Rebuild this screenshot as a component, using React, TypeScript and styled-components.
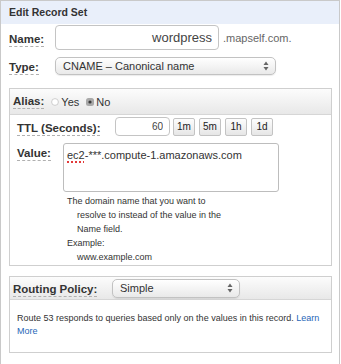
import React from 'react';
import styled, { createGlobalStyle } from 'styled-components';

const Global = createGlobalStyle`
  html, body { margin: 0; padding: 0; background: #fff; }
  body { font-family: "Liberation Sans", Arial, Helvetica, sans-serif; color: #333; }
  * { box-sizing: border-box; }
`;

const Frame = styled.div`
  width: 340px;
  height: 364px;
  border: 1px solid #c9c9c9;
  border-bottom: none;
  background: #fff;
`;

const Header = styled.div`
  height: 23px;
  background: #e9effa;
  padding-left: 8px;
  font-size: 10.5px;
  font-weight: bold;
  line-height: 23px;
  color: #333;
`;

const Body = styled.div`
  padding: 1px 7px 0 8px;
`;

const Row = styled.div<{ $mt?: number }>`
  display: flex;
  align-items: center;
  margin-top: ${p => p.$mt ?? 0}px;
`;

const LabelCell = styled.div<{ $w: number; $top?: boolean }>`
  width: ${p => p.$w}px;
  flex: none;
  align-self: ${p => (p.$top ? 'flex-start' : 'center')};
`;

const Label = styled.span`
  display: inline-block;
  font-size: 11.5px;
  font-weight: bold;
  color: #333;
  line-height: 13px;
  border-bottom: 1px dashed #b0b0b0;
`;

const TextInput = styled.input<{ $w: number; $h: number; $fs: number }>`
  width: ${p => p.$w}px;
  height: ${p => p.$h}px;
  border: 1px solid #c4c4c4;
  border-radius: 4px;
  font-family: inherit;
  font-size: ${p => p.$fs}px;
  color: #444;
  text-align: right;
  padding: 0 6px;
  background: #fff;
  outline: none;
`;

const Suffix = styled.span`
  font-size: 11px;
  color: #666;
  margin-left: 4px;
`;

const Select = styled.div<{ $w: number; $h: number }>`
  width: ${p => p.$w}px;
  height: ${p => p.$h}px;
  border: 1px solid #c2c2c2;
  border-radius: 5px;
  background: linear-gradient(#ffffff, #e9e9e9);
  box-shadow: 0 1px 1px rgba(0, 0, 0, 0.08);
  display: flex;
  align-items: center;
  justify-content: space-between;
  padding: 0 6px 0 7px;
  font-size: 11px;
  color: #333;
`;

const Arrows = () => (
  <svg width="6" height="10" viewBox="0 0 6 10">
    <path d="M3 0.5 L5.5 4 H0.5 Z" fill="#666" />
    <path d="M3 9.5 L5.5 6 H0.5 Z" fill="#666" />
  </svg>
);

const Panel = styled.div<{ $mt: number }>`
  width: 323px;
  border: 1px solid #cfcfcf;
  margin-top: ${p => p.$mt}px;
`;

const PanelHeader = styled.div<{ $h: number }>`
  height: ${p => p.$h}px;
  background: linear-gradient(#fcfcfc, #e8e8e8);
  border-bottom: 1px solid #d6d6d6;
  display: flex;
  align-items: center;
  padding-left: 3px;
`;

const RadioGroup = styled.label`
  display: inline-flex;
  align-items: center;
  font-size: 11px;
  color: #333;
  margin-left: 7px;
  gap: 2px;
`;

const RadioIcon = ({ checked }: { checked: boolean }) =>
  checked ? (
    <svg width="8" height="8" viewBox="0 0 8 8">
      <rect x="0" y="0" width="8" height="8" rx="2.5" fill="#a9a9a9" />
      <circle cx="4" cy="4" r="1.6" fill="#3a3a3a" />
    </svg>
  ) : (
    <svg width="8" height="8" viewBox="0 0 8 8">
      <circle cx="4" cy="4" r="3.4" fill="#fff" stroke="#c8c8c8" strokeWidth="0.9" />
    </svg>
  );

const PanelBody = styled.div`
  padding: 2px 0 1px 7px;
`;

const QuickButtons = styled.div`
  display: flex;
  gap: 4px;
  margin-left: 3px;
`;

const SmallButton = styled.button`
  width: 22px;
  height: 18px;
  padding: 0;
  border: 1px solid #c3c3c3;
  border-radius: 2px;
  background: linear-gradient(#fdfdfd, #e6e6e6);
  font-family: inherit;
  font-size: 10px;
  color: #222;
`;

const ValueBox = styled.div`
  width: 216px;
  height: 49px;
  border: 1px solid #bdbdbd;
  border-radius: 3px;
  padding: 5px 3px;
  font-size: 11px;
  color: #333;
  line-height: 13px;
`;

const Misspelled = styled.span`
  text-decoration: underline dotted #e23a3a;
  text-decoration-thickness: 2px;
  text-underline-offset: 2px;
`;

const Help = styled.div`
  margin: 2px 0 0 50px;
  font-size: 9px;
  line-height: 14px;
  color: #333;
`;

const Indent = styled.span`
  padding-left: 10px;
`;

const RoutingText = styled.div`
  padding: 12px 7px 14px 7px;
  font-size: 9px;
  line-height: 13px;
  color: #333;
  white-space: nowrap;
`;

const Link = styled.a`
  color: #1f67b8;
  text-decoration: none;
`;

export default function App() {
  return (
    <>
      <Global />
      <Frame>
        <Header>Edit Record Set</Header>
        <Body>
          <Row $mt={0}>
            <LabelCell $w={46}>
              <Label>Name:</Label>
            </LabelCell>
            <TextInput $w={164} $h={25} $fs={13} defaultValue="wordpress" readOnly />
            <Suffix>.mapself.com.</Suffix>
          </Row>
          <Row $mt={7}>
            <LabelCell $w={46}>
              <Label>Type:</Label>
            </LabelCell>
            <Select $w={221} $h={18}>
              <span>CNAME – Canonical name</span>
              <Arrows />
            </Select>
          </Row>
          <Panel $mt={13}>
            <PanelHeader $h={26}>
              <Label>Alias:</Label>
              <RadioGroup>
                <RadioIcon checked={false} />
                Yes
              </RadioGroup>
              <RadioGroup>
                <RadioIcon checked />
                No
              </RadioGroup>
            </PanelHeader>
            <PanelBody>
              <Row $mt={0}>
                <LabelCell $w={98}>
                  <Label>TTL (Seconds):</Label>
                </LabelCell>
                <TextInput $w={55} $h={19} $fs={10} defaultValue="60" readOnly />
                <QuickButtons>
                  <SmallButton>1m</SmallButton>
                  <SmallButton>5m</SmallButton>
                  <SmallButton>1h</SmallButton>
                  <SmallButton>1d</SmallButton>
                </QuickButtons>
              </Row>
              <Row $mt={7}>
                <LabelCell $w={46} $top>
                  <Label>Value:</Label>
                </LabelCell>
                <ValueBox>
                  <Misspelled>ec2</Misspelled>-***.compute-1.amazonaws.com
                </ValueBox>
              </Row>
              <Help>
                The domain name that you want to
                <br />
                <Indent>resolve to instead of the value in the</Indent>
                <br />
                <Indent>Name field.</Indent>
                <br />
                Example:
                <br />
                <Indent>www.example.com</Indent>
              </Help>
            </PanelBody>
          </Panel>
          <Panel $mt={10}>
            <PanelHeader $h={23}>
              <LabelCell $w={99}>
                <Label>Routing Policy:</Label>
              </LabelCell>
              <Select $w={128} $h={19}>
                <span>Simple</span>
                <Arrows />
              </Select>
            </PanelHeader>
            <RoutingText>
              Route 53 responds to queries based only on the values in this record.{' '}
              <Link href="#">Learn</Link>
              <br />
              <Link href="#">More</Link>
            </RoutingText>
          </Panel>
        </Body>
      </Frame>
    </>
  );
}
